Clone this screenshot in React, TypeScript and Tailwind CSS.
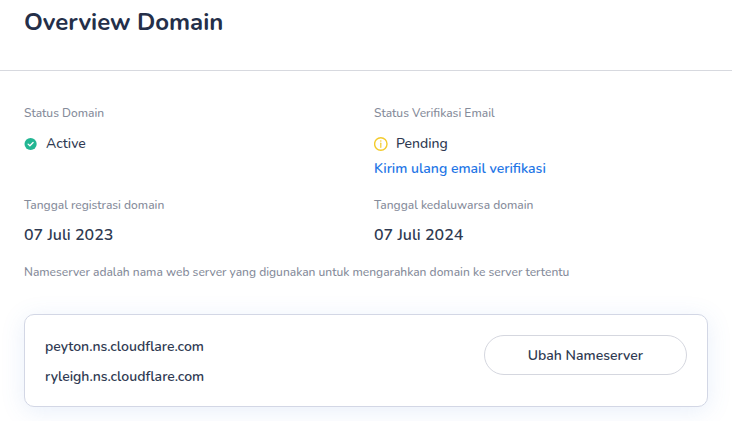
import type { ReactNode } from "react";

function CheckIcon() {
  return (
    <svg viewBox="0 0 14 14" className="size-[14px] shrink-0" aria-hidden="true">
      <circle cx="6.6" cy="7" r="6.1" fill="#22b693" />
      <path d="M4.1 7.1 5.9 8.8 9.1 5.5" fill="none" stroke="#fff" strokeWidth="1.3" strokeLinecap="round" strokeLinejoin="round" />
    </svg>
  );
}

function InfoIcon() {
  return (
    <svg viewBox="0 0 14 14" className="size-[14px] shrink-0" aria-hidden="true">
      <circle cx="6.8" cy="7" r="6.2" fill="none" stroke="#f3cb2c" strokeWidth="1.4" />
      <path d="M6.8 6.2v4.1" stroke="#f3cb2c" strokeWidth="1.2" strokeLinecap="round" />
      <circle cx="6.8" cy="4.1" r="0.75" fill="#f3cb2c" />
    </svg>
  );
}

function Field({ label, children }: { label: string; children: ReactNode }) {
  return (
    <div>
      <dt className="text-[12px] leading-5 font-medium text-[#858b9a]">{label}</dt>
      <dd className="mt-[11px]">{children}</dd>
    </div>
  );
}

const nameservers = ["peyton.ns.cloudflare.com", "ryleigh.ns.cloudflare.com"];

export default function App() {
  return (
    <main className="bg-white pb-4 font-['Nunito','Open_Sans',sans-serif] text-[#2f3a52]">
      <header className="border-b border-[#d7d9df] px-6 pt-1 pb-[30px]">
        <h1 className="text-[24px] leading-9 font-bold text-[#242f49]">Overview Domain</h1>
      </header>
      <section className="px-6 pt-8">
        <dl className="grid grid-cols-2 gap-x-4 gap-y-4">
          <Field label="Status Domain">
            <div className="flex items-center gap-2 text-[14px] leading-5 font-medium">
              <CheckIcon />
              Active
            </div>
          </Field>
          <Field label="Status Verifikasi Email">
            <div className="flex items-center gap-2 text-[14px] leading-5 font-medium">
              <InfoIcon />
              Pending
            </div>
            <a href="#verifikasi" className="mt-[5px] block text-[14px] leading-5 font-semibold text-[#1f76e6]">
              Kirim ulang email verifikasi
            </a>
          </Field>
          <Field label="Tanggal registrasi domain">
            <p className="text-[16px] leading-[18px] font-semibold">07 Juli 2023</p>
          </Field>
          <Field label="Tanggal kedaluwarsa domain">
            <p className="text-[16px] leading-[18px] font-semibold">07 Juli 2024</p>
          </Field>
        </dl>
        <p className="mt-[18px] text-[12px] leading-5 font-medium text-[#858b9a]">
          Nameserver adalah nama web server yang digunakan untuk mengarahkan domain ke server tertentu
        </p>
        <div className="mt-8 flex items-start justify-between rounded-[10px] border border-[#d3d7e5] bg-white px-5 pt-5 pb-[18px] shadow-[0_4px_24px_rgba(80,130,220,0.13)]">
          <ul className="space-y-2 pt-px text-[14px] leading-[22px] font-semibold">
            {nameservers.map((name) => (
              <li key={name}>{name}</li>
            ))}
          </ul>
          <button type="button" className="h-10 rounded-full border border-[#d5d7df] px-[43px] text-[14px] font-semibold">
            Ubah Nameserver
          </button>
        </div>
      </section>
    </main>
  );
}
